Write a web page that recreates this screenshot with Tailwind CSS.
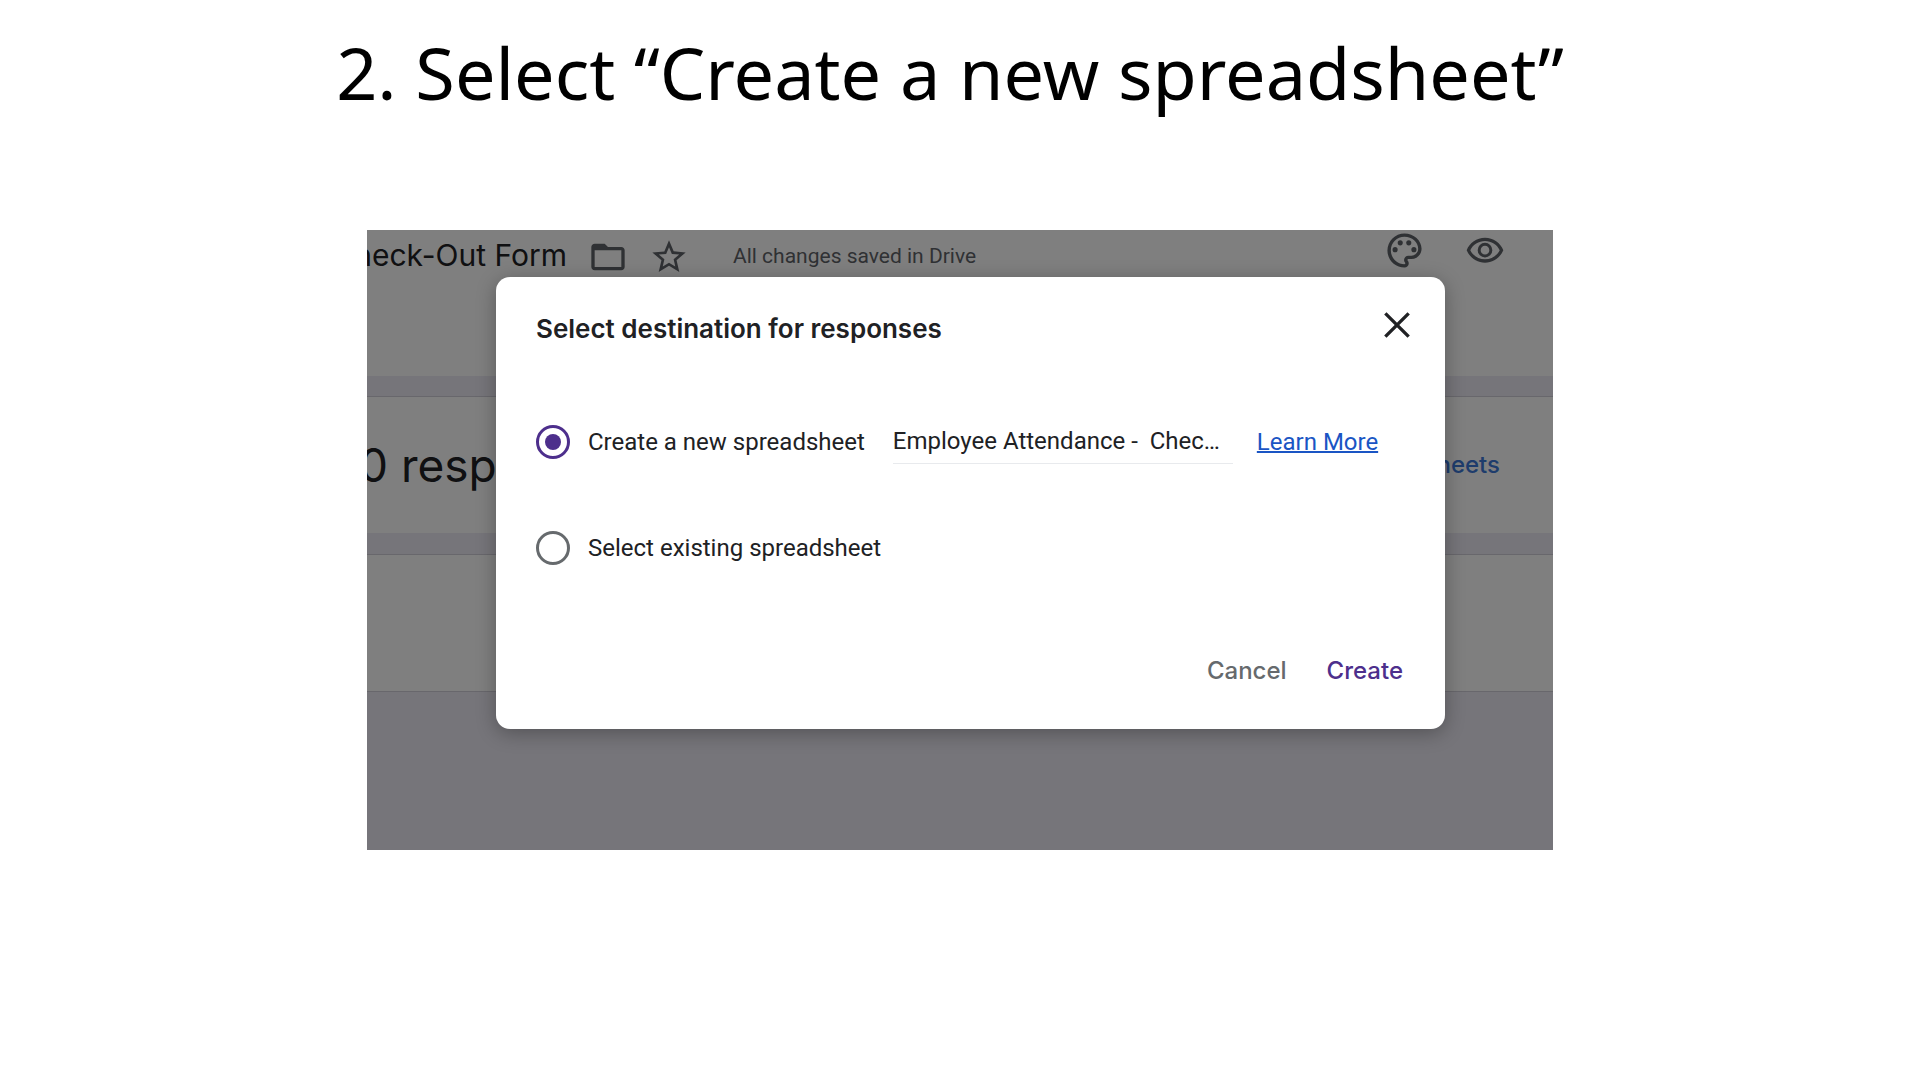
<!DOCTYPE html>
<html lang="en">
<head>
  <meta charset="UTF-8" />
  <meta name="viewport" content="width=device-width, initial-scale=1.0"/>
  <title>Select "Create a new spreadsheet"</title>
  <script src="https://cdn.jsdelivr.net/npm/@tailwindcss/browser@4"></script>
</head>
<body class="min-h-screen bg-white font-[Roboto,sans-serif] text-[#202124]">
  <main class="flex flex-col items-center">
    <h1 class="pt-5 pr-5 text-center font-['Noto_Sans',sans-serif] text-[72px] leading-[104px] text-black">2. Select “Create a new spreadsheet”</h1>

    <section class="relative mt-[106px] w-full max-w-[1186px] overflow-hidden bg-[#ecebf4]">
      <!-- Form editor behind the dialog -->
      <header class="flex h-[146px] items-start bg-white">
        <div class="flex w-[200px] shrink-0 justify-end overflow-hidden pt-[3px]">
          <span class="whitespace-nowrap font-[Inter,sans-serif] text-[30px] leading-[44px]">Check-Out Form</span>
        </div>
        <button type="button" aria-label="Move to folder" class="ml-[21px] pt-[7px] text-[#5f6368]">
          <svg class="size-10" viewBox="0 0 24 24" fill="currentColor"><path d="M20 6h-8l-2-2H4c-1.1 0-2 .9-2 2v12c0 1.1.9 2 2 2h16c1.1 0 2-.9 2-2V8c0-1.1-.9-2-2-2zm0 12H4V8h16v10z"/></svg>
        </button>
        <button type="button" aria-label="Star" class="ml-[21px] pt-[7px] text-[#5f6368]">
          <svg class="size-10" viewBox="0 0 24 24" fill="currentColor"><path d="M22 9.24l-7.19-.62L12 2 9.19 8.63 2 9.24l5.46 4.73L5.82 21 12 17.27 18.18 21l-1.63-7.03L22 9.24zM12 15.4l-3.76 2.27 1-4.28-3.32-2.88 4.38-.38L12 6.1l1.71 4.04 4.38.38-3.32 2.88 1 4.28L12 15.4z"/></svg>
        </button>
        <span class="ml-11 pt-2 text-[21px] leading-9 text-[#5f6368]">All changes saved in Drive</span>
        <div class="ml-auto flex gap-10 pr-12 text-[#5f6368]">
          <button type="button" aria-label="Customize theme">
            <svg class="size-[41px]" viewBox="0 0 24 24" fill="currentColor"><path d="M12 22C6.49 22 2 17.51 2 12S6.49 2 12 2s10 4.04 10 9c0 3.31-2.69 6-6 6h-1.77c-.28 0-.5.22-.5.5 0 .12.05.23.13.33.41.47.64 1.06.64 1.67A2.5 2.5 0 0 1 12 22zm0-18c-4.41 0-8 3.59-8 8s3.59 8 8 8c.28 0 .5-.22.5-.5a.54.54 0 0 0-.14-.35c-.41-.46-.63-1.05-.63-1.65a2.5 2.5 0 0 1 2.5-2.5H16c2.21 0 4-1.79 4-4 0-3.86-3.59-7-8-7z"/><circle cx="6.5" cy="11.5" r="1.5"/><circle cx="9.5" cy="7.5" r="1.5"/><circle cx="14.5" cy="7.5" r="1.5"/><circle cx="17.5" cy="11.5" r="1.5"/></svg>
          </button>
          <button type="button" aria-label="Preview">
            <svg class="size-10" viewBox="0 0 24 24" fill="currentColor"><path d="M12 6c3.79 0 7.17 2.13 8.82 5.5C19.17 14.87 15.79 17 12 17s-7.17-2.13-8.82-5.5C4.83 8.13 8.21 6 12 6m0-2C7 4 2.73 7.11 1 11.5 2.73 15.89 7 19 12 19s9.27-3.11 11-7.5C21.27 7.11 17 4 12 4z"/><circle cx="12" cy="11.5" r="3.5" fill="none" stroke="currentColor" stroke-width="1.8"/></svg>
          </button>
        </div>
      </header>
      <div class="mt-5 flex h-[137px] items-center justify-between border-t border-[#d0cfd8] bg-white pr-[53px] font-[Inter,sans-serif]">
        <h2 class="-ml-2 text-[46px]">0 responses</h2>
        <a href="#" class="text-[24px] font-medium text-[#3c78d8]">View in Sheets</a>
      </div>
      <div class="mt-[21px] h-[138px] border-y border-[#d0cfd8] bg-white"></div>
      <div class="h-[158px]"></div>
      <div class="absolute inset-0 bg-black/50"></div>

      <!-- Dialog -->
      <form role="dialog" aria-labelledby="dialogTitle" class="absolute top-[47px] right-[108px] left-[129px] rounded-[14px] bg-white px-10 pb-[38px] shadow-[0_4px_20px_rgba(0,0,0,0.3)]">
        <div class="flex items-center justify-between pt-6">
          <h2 id="dialogTitle" class="pt-2 font-[Inter,sans-serif] text-[26px] leading-10 font-semibold">Select destination for responses</h2>
          <button type="button" aria-label="Close" class="-mr-3">
            <svg class="size-10" viewBox="0 0 24 24" fill="none" stroke="currentColor" stroke-width="2"><path d="M5 5l14 14M19 5L5 19"/></svg>
          </button>
        </div>

        <div class="mt-[73px] flex h-10 items-center">
          <input type="radio" id="createNew" name="destination" checked class="size-[34px] shrink-0 appearance-none rounded-full border-3 border-[#4d2f8c] bg-[#4d2f8c] bg-clip-content p-[6px]">
          <label for="createNew" class="ml-[18px] whitespace-nowrap text-[24px]">Create a new spreadsheet</label>
          <input type="text" aria-label="Spreadsheet name" value="Employee Attendance -  Check-Out Form (Responses)" class="ml-7 h-11 w-[340px] border-b border-[#e8eaed] pr-3 pb-[2px] text-[24px] text-ellipsis">
          <a href="#" class="ml-6 whitespace-nowrap text-[24px] text-[#1a55c4] underline decoration-2">Learn More</a>
        </div>
        <div class="mt-[66px] flex h-10 items-center">
          <input type="radio" id="selectExisting" name="destination" class="size-[34px] shrink-0 appearance-none rounded-full border-3 border-[#666a6d]">
          <label for="selectExisting" class="ml-[18px] whitespace-nowrap text-[24px]">Select existing spreadsheet</label>
        </div>

        <div class="mt-[83px] flex justify-end gap-10 pr-[2px] font-[Inter,sans-serif] text-[24px] leading-10 font-medium">
          <button type="button" class="text-[#666a6d]">Cancel</button>
          <button type="submit" class="text-[#4d2f8c]">Create</button>
        </div>
      </form>
    </section>
  </main>
</body>
</html>
